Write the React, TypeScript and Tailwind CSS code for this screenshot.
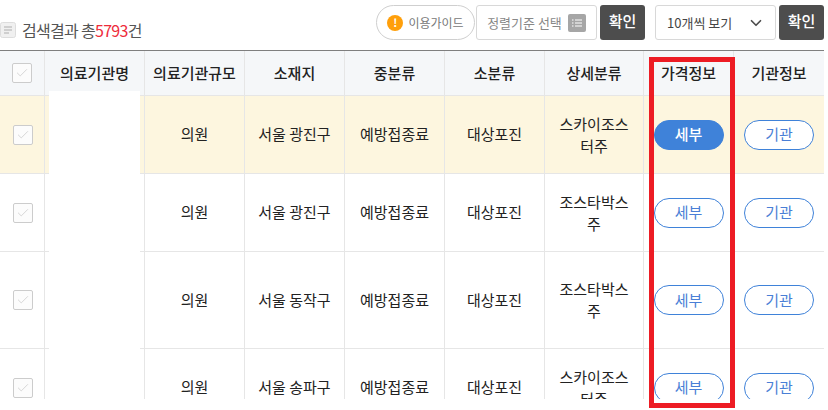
import { Check, ChevronDown } from 'lucide-react';

const font = "font-['Noto_Sans_CJK_KR','Noto_Sans',sans-serif]";

const headers = ['의료기관명', '의료기관규모', '소재지', '중분류', '소분류', '상세분류', '가격정보', '기관정보'];

const rows = [
  { h: 'h-[78px]', area: '서울 광진구', detail: ['스카이조스', '터주'], active: true },
  { h: 'h-[78px]', area: '서울 광진구', detail: ['조스타박스', '주'], active: false },
  { h: 'h-[97px]', area: '서울 동작구', detail: ['조스타박스', '주'], active: false },
  { h: 'h-[78px]', area: '서울 송파구', detail: ['스카이조스', '터주'], active: false },
];

const cell = 'border-r border-b border-[#e6e6e6] text-center align-middle';

const CheckBox = ({ className }: { className: string }) => (
  <div
    className={`flex h-5 w-5 items-center justify-center rounded-[2px] border border-[#cccccc] bg-[#fcfcfc] ${className}`}>
    <Check size={14} strokeWidth={1.25} className="text-[#c8c8c8]" />
  </div>
);

const PillButton = ({ label, filled }: { label: string; filled?: boolean }) => (
  <button
    className={`mx-auto flex h-[30px] w-[70px] items-center justify-center rounded-[15px] border border-[#3f82d9] text-[15px] ${
      filled ? 'bg-[#3f82d9] font-medium text-white' : 'bg-white text-[#4a7fd6]'
    }`}>
    {label}
  </button>
);

const App = () => {
  return (
    <div className={`relative h-[410px] w-[828px] overflow-hidden bg-white ${font}`}>
      <div className="h-[399px] overflow-hidden">
        <div className="flex h-[50px] w-[824px] items-start justify-between pt-[5px]">
          <div className="flex h-[48px] items-center gap-[6px] pt-[1px] text-base tracking-[-0.7px] text-[#555555]">
            <svg width="16" height="16" viewBox="0 0 16 16" className="mt-[1px]">
              <rect x="0.5" y="0.5" width="15" height="15" rx="2" fill="#f0f0f0" stroke="#dddddd" />
              <path d="M4 5h8M4 8h8M4 11h5" stroke="#c4c4c4" strokeWidth="1.4" />
            </svg>
            <span>
              검색결과 총<span className="text-[#ee2b3b]">5793</span>건
            </span>
          </div>
          <div className="flex items-start">
            <div className="flex h-[35px] w-[99px] items-center justify-center gap-[5px] rounded-[18px] border border-[#cfcfcf] text-xs text-[#777777]">
              <span className="flex h-4 w-4 items-center justify-center rounded-full bg-[#ff9f0a] text-[11px] font-bold text-white">
                !
              </span>
              이용가이드
            </div>
            <div className="ml-[1px] flex h-[35px] w-[121px] items-center justify-center gap-[6px] rounded-[3px] border border-[#d8d8d8] text-[13px] text-[#888888]">
              정렬기준 선택
              <span className="flex h-[18px] w-[18px] items-center justify-center rounded-[2px] bg-[#a6a6a6]">
                <svg width="10" height="8" viewBox="0 0 10 8">
                  <path d="M0 1h1.5M3 1h7M0 4h1.5M3 4h7M0 7h1.5M3 7h7" stroke="#ffffff" strokeWidth="1" />
                </svg>
              </span>
            </div>
            <button className="ml-[3px] h-[35px] w-[45px] rounded-[3px] bg-[#4d4d4d] pb-[3px] text-[15px] font-medium text-white">
              확인
            </button>
            <div className="ml-[10px] flex h-[35px] w-[121px] items-center justify-between rounded-[3px] border border-[#d8d8d8] pr-[10px] pl-[11px] text-[13px] text-[#444444]">
              10개씩 보기
              <ChevronDown size={18} strokeWidth={2.25} className="text-[#4d4d4d]" />
            </div>
            <button className="ml-[3px] h-[35px] w-[45px] rounded-[3px] bg-[#4d4d4d] pb-[3px] text-[15px] font-medium text-white">
              확인
            </button>
          </div>
        </div>

        <table className="w-[824px] table-fixed border-separate border-spacing-0 border-t border-[#7f7f7f] text-[15px] text-[#222222]">
          <colgroup>
            <col className="w-[45px]" />
            <col className="w-[100px]" />
            <col className="w-[100px]" />
            <col className="w-[100px]" />
            <col className="w-[100px]" />
            <col className="w-[100px]" />
            <col className="w-[99px]" />
            <col className="w-[90px]" />
            <col className="w-[90px]" />
          </colgroup>
          <thead>
            <tr className="h-[45px] bg-[#f5f7f9]">
              <th className={cell}>
                <CheckBox className="ml-[12px]" />
              </th>
              {headers.map((title, index) => (
                <th
                  key={title}
                  className={`${index === headers.length - 1 ? 'border-b border-[#e6e6e6] text-center' : cell} font-medium`}>
                  {title}
                </th>
              ))}
            </tr>
          </thead>
          <tbody>
            {rows.map((row, index) => (
              <tr key={index} className={`${row.h} ${row.active ? 'bg-[#fdf6df]' : 'bg-white'}`}>
                <td className={cell}>
                  <CheckBox className="ml-[13px]" />
                </td>
                <td className={cell} />
                <td className={cell}>의원</td>
                <td className={cell}>{row.area}</td>
                <td className={cell}>예방접종료</td>
                <td className={cell}>대상포진</td>
                <td className={`${cell} leading-[22px]`}>
                  {row.detail[0]}
                  <br />
                  {row.detail[1]}
                </td>
                <td className={cell}>
                  <PillButton label="세부" filled={row.active} />
                </td>
                <td className="border-b border-[#e6e6e6]">
                  <PillButton label="기관" />
                </td>
              </tr>
            ))}
          </tbody>
        </table>
      </div>

      {/* redacted name column */}
      <div className="absolute top-[91px] left-[49px] h-[308px] w-[91px] bg-white" />
      {/* red highlight box */}
      <div className="pointer-events-none absolute top-[57px] left-[649px] h-[351px] w-[86px] border-[5px] border-[#ed1c24]" />
    </div>
  );
};

export default App;
